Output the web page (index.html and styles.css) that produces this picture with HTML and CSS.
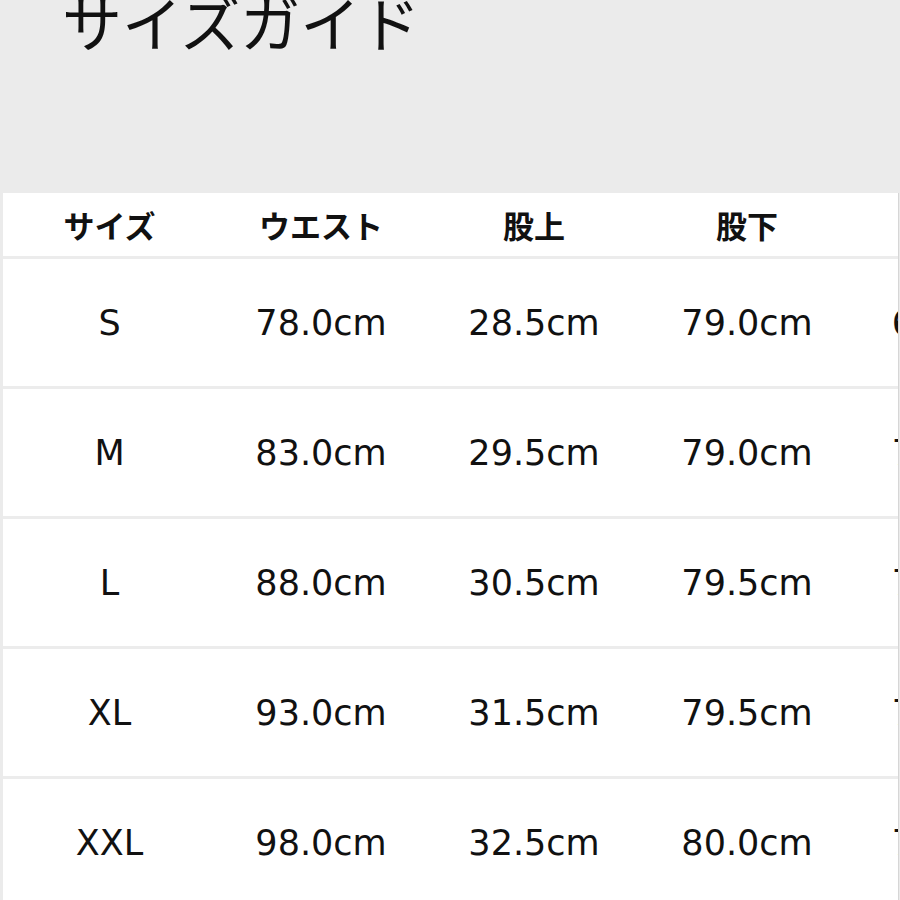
FILE: index.html
```html
<!DOCTYPE html>
<html lang="ja">
<head>
<meta charset="utf-8">
<title>サイズガイド</title>
<link rel="stylesheet" href="styles.css">
</head>
<body>
<div class="page">
  <header class="top">
    <h1 class="title">サイズガイド</h1>
  </header>
  <div class="card">
    <div class="table">
      <div class="row head">
        <div class="cell">サイズ</div>
        <div class="cell">ウエスト</div>
        <div class="cell">股上</div>
        <div class="cell">股下</div>
        <div class="cell">ワタリ</div>
      </div>
      <div class="row">
        <div class="cell">S</div>
        <div class="cell">78.0cm</div>
        <div class="cell">28.5cm</div>
        <div class="cell">79.0cm</div>
        <div class="cell">65.0cm</div>
      </div>
      <div class="row">
        <div class="cell">M</div>
        <div class="cell">83.0cm</div>
        <div class="cell">29.5cm</div>
        <div class="cell">79.0cm</div>
        <div class="cell">70.0cm</div>
      </div>
      <div class="row">
        <div class="cell">L</div>
        <div class="cell">88.0cm</div>
        <div class="cell">30.5cm</div>
        <div class="cell">79.5cm</div>
        <div class="cell">72.0cm</div>
      </div>
      <div class="row">
        <div class="cell">XL</div>
        <div class="cell">93.0cm</div>
        <div class="cell">31.5cm</div>
        <div class="cell">79.5cm</div>
        <div class="cell">74.0cm</div>
      </div>
      <div class="row">
        <div class="cell">XXL</div>
        <div class="cell">98.0cm</div>
        <div class="cell">32.5cm</div>
        <div class="cell">80.0cm</div>
        <div class="cell">76.0cm</div>
      </div>
    </div>
  </div>
</div>
</body>
</html>
```

FILE: styles.css
```css
html, body {
  margin: 0;
  padding: 0;
  background: #ebebeb;
  overflow: hidden;
}
.page {
  width: 900px;
  height: 900px;
  overflow: hidden;
}
.top {
  height: 193px;
  overflow: hidden;
}
.title {
  margin: -9px 0 0 62px;
  font-family: "Noto Sans CJK JP", sans-serif;
  font-weight: 400;
  font-size: 60px;
  line-height: 60px;
  color: #111;
  letter-spacing: 0;
}
.card {
  margin-left: 3px;
  width: 895px;
  border-right: 1px solid #d6d6d6;
  background: #fff;
  overflow: hidden;
}
.table {
  width: 1067px;
}
.row {
  display: grid;
  grid-template-columns: repeat(5, 213px);
  height: 127px;
  border-bottom: 3px solid #ececec;
  align-items: center;
  font-family: "DejaVu Sans", sans-serif;
  font-size: 35px;
  color: #111;
}
.row.head {
  height: 63px;
  font-family: "Noto Sans CJK JP", sans-serif;
  font-weight: 700;
  font-size: 31px;
}
.cell {
  text-align: center;
  white-space: nowrap;
}
.cell:nth-child(2),
.cell:nth-child(3),
.cell:nth-child(4) {
  padding-right: 3px;
}
.cell:nth-child(5) {
  padding-right: 8px;
}
```
